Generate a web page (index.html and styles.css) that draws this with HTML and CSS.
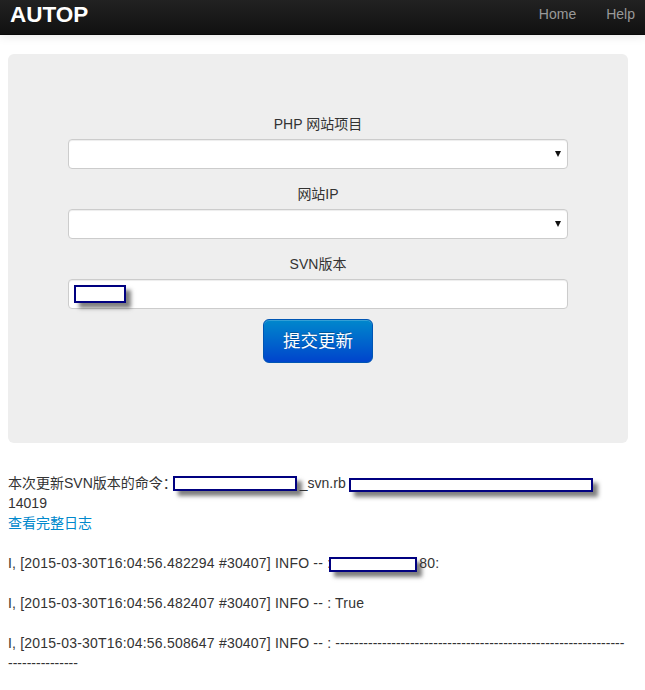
FILE: index.html
```html
<!DOCTYPE html>
<html lang="zh-CN">
<head>
<meta charset="utf-8">
<title>AUTOP</title>
<link rel="stylesheet" href="styles.css">
</head>
<body>
<header class="navbar">
  <a class="brand" href="#">AUTOP</a>
  <nav class="nav">
    <a href="#">Home</a>
    <a href="#">Help</a>
  </nav>
</header>
<main class="container">
  <form class="panel">
    <label class="field-label" for="project">PHP 网站项目</label>
    <div class="select-wrap"><select id="project" class="control"></select></div>
    <label class="field-label" for="ip">网站IP</label>
    <div class="select-wrap"><select id="ip" class="control"></select></div>
    <label class="field-label" for="svn">SVN版本</label>
    <div class="input-wrap">
      <input id="svn" class="control" type="text">
      <span class="redact redact-input"></span>
    </div>
    <button class="submit" type="button">提交更新</button>
  </form>
  <section class="log">
    <p>本次更新SVN版本的命令：<span class="redact redact-a"></span>_svn.rb <span class="redact redact-b"></span> 14019<br><a href="#">查看完整日志</a></p>
    <p class="entry">I, [2015-03-30T16:04:56.482294 #30407] INFO -- : <span class="redact redact-c"></span>80:</p>
    <p class="entry">I, [2015-03-30T16:04:56.482407 #30407] INFO -- : True</p>
    <p class="entry">I, [2015-03-30T16:04:56.508647 #30407] INFO -- : <span class="dashes">-----------------------------------------------------------------------------</span></p>
  </section>
</main>
</body>
</html>
```
FILE: styles.css
```css
* { box-sizing: border-box; }
html, body { margin: 0; padding: 0; overflow: hidden; }
body {
  height: 690px;
  background: #fff;
  color: #333;
  font: 14px/20px "Liberation Sans", "Noto Sans CJK SC", sans-serif;
}
.navbar {
  display: flex;
  justify-content: space-between;
  height: 35px;
  padding: 0 10px;
  background: linear-gradient(#222, #111);
  border-bottom: 1px solid #0a0a0a;
  box-shadow: 0 1px 10px rgba(0, 0, 0, .1);
}
.brand {
  color: #fff;
  font-size: 22.5px;
  font-weight: bold;
  line-height: 29px;
  text-decoration: none;
}
.nav { display: flex; gap: 30px; line-height: 29px; }
.nav a { color: #999; text-decoration: none; }
.container { width: 620px; margin: 19px 0 0 8px; }
.panel {
  display: flex;
  flex-direction: column;
  align-items: center;
  height: 389px;
  padding: 60px 60px 0;
  background: #eee;
  border-radius: 6px;
}
.field-label { display: block; margin-bottom: 5px; color: #333; }
.select-wrap, .input-wrap { position: relative; width: 500px; height: 30px; margin-bottom: 15px; }
.input-wrap { margin-bottom: 10px; }
.control {
  display: block;
  width: 100%;
  height: 30px;
  padding: 4px 6px;
  background: #fff;
  border: 1px solid #ccc;
  border-radius: 4px;
  box-shadow: inset 0 1px 1px rgba(0, 0, 0, .075);
  appearance: none;
}
.select-wrap::after {
  content: "";
  position: absolute;
  top: 12px;
  right: 7px;
  border-top: 6px solid #111;
  border-left: 3px solid transparent;
  border-right: 3px solid transparent;
}
.submit {
  width: 110px;
  height: 44px;
  padding: 0;
  color: #fff;
  font: 17.5px/24px "Liberation Sans", "Noto Sans CJK SC", sans-serif;
  background: linear-gradient(#0088cc, #0044cc);
  border: 1px solid #0055b3;
  border-radius: 6px;
  box-shadow: inset 0 1px 0 rgba(255, 255, 255, .2);
  text-shadow: 0 -1px 0 rgba(0, 0, 0, .25);
}
.log { margin-top: 30px; }
.log p { margin: 0 0 20px; }
.log a { color: #0088cc; text-decoration: none; }
.entry { letter-spacing: .2px; }
.dashes { letter-spacing: 0; word-break: break-all; }
.redact {
  display: inline-block;
  background: #fff;
  border: 2px solid #000080;
  box-shadow: 5px 5px 4px rgba(0, 0, 0, .5);
}
.redact-a { width: 124px; height: 15px; margin: 0 3px 0 -4px; vertical-align: -3px; }
.redact-b { width: 244px; height: 14px; margin-left: -1px; vertical-align: -4px; }
.redact-c { width: 88px; height: 15px; margin: 0 2px 0 -6px; vertical-align: -4px; }
.redact-input { position: absolute; left: 6px; top: 6px; width: 52px; height: 18px; }
```
